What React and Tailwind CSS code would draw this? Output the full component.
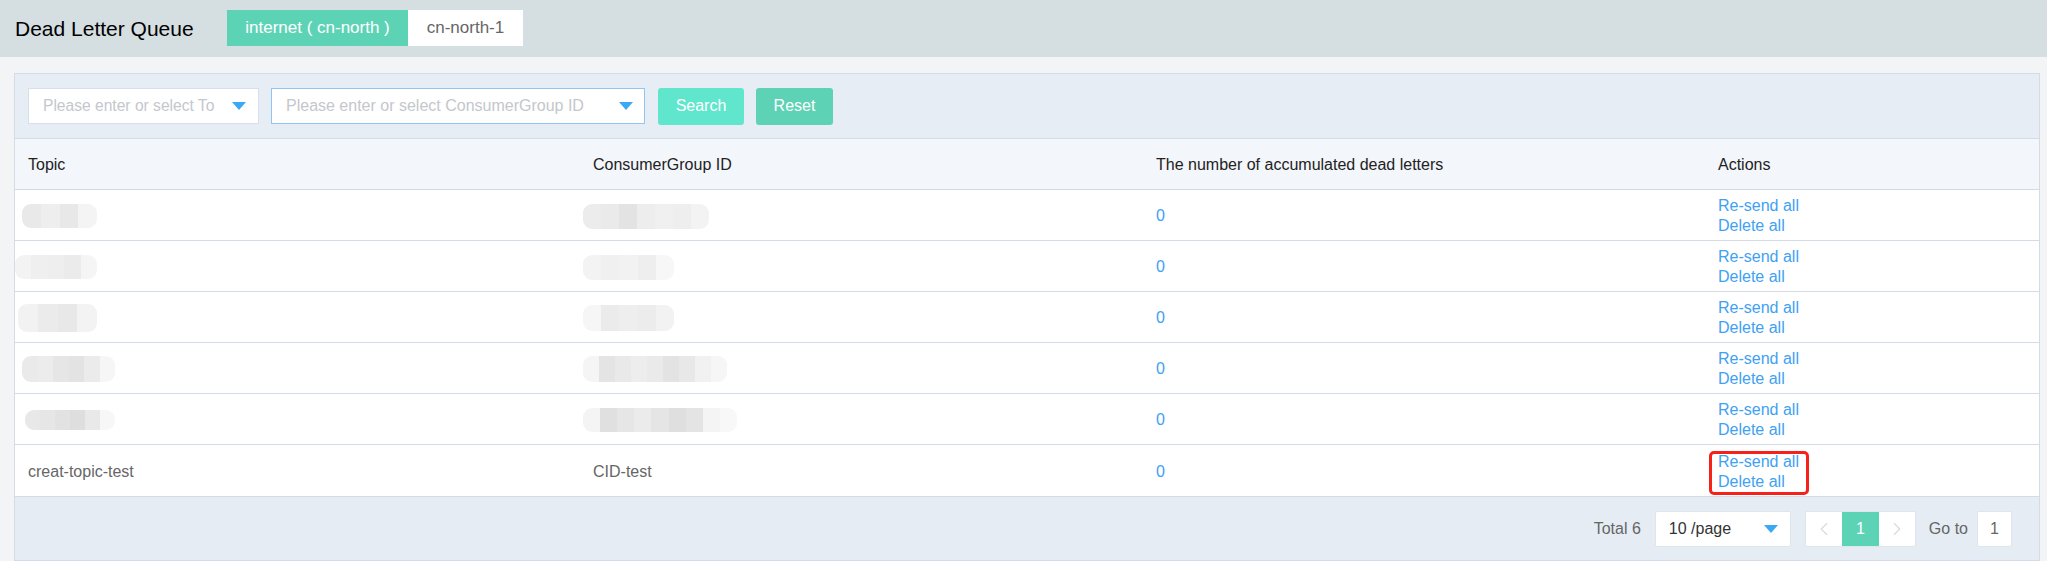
import { ChevronLeft, ChevronRight } from "lucide-react";

const rows = [
  {
    topic: "ml-[-6px] w-[75px] h-[24px]",
    group: "ml-[-10px] w-[126px] h-[25px]",
    tCells: ["bg-[#e9e9e9]", "bg-[#eeeeee]", "bg-[#e8e8e8]", "bg-[#f4f4f4]"],
    gCells: ["bg-[#ececec]", "bg-[#eaeaea]", "bg-[#e3e3e3]", "bg-[#ededed]", "bg-[#f0f0f0]", "bg-[#eeeeee]", "bg-[#f3f3f3]"],
  },
  {
    topic: "ml-[-13px] w-[82px] h-[24px]",
    group: "ml-[-10px] w-[91px] h-[25px]",
    tCells: ["bg-[#f3f3f3]", "bg-[#efefef]", "bg-[#eeeeee]", "bg-[#ebebeb]", "bg-[#f5f5f5]"],
    gCells: ["bg-[#f3f3f3]", "bg-[#f0f0f0]", "bg-[#f2f2f2]", "bg-[#eeeeee]", "bg-[#f7f7f7]"],
  },
  {
    topic: "ml-[-10px] w-[79px] h-[28px]",
    group: "ml-[-10px] w-[91px] h-[26px]",
    tCells: ["bg-[#f2f2f2]", "bg-[#ebebeb]", "bg-[#e8e8e8]", "bg-[#f3f3f3]"],
    gCells: ["bg-[#f6f6f6]", "bg-[#ebebeb]", "bg-[#eeeeee]", "bg-[#ececec]", "bg-[#f2f2f2]"],
  },
  {
    topic: "ml-[-6px] w-[93px] h-[26px]",
    group: "ml-[-10px] w-[144px] h-[26px]",
    tCells: ["bg-[#eaeaea]", "bg-[#ececec]", "bg-[#e6e6e6]", "bg-[#e3e3e3]", "bg-[#ebebeb]", "bg-[#f6f6f6]"],
    gCells: ["bg-[#f5f5f5]", "bg-[#e4e4e4]", "bg-[#e9e9e9]", "bg-[#ededed]", "bg-[#eaeaea]", "bg-[#e3e3e3]", "bg-[#e8e8e8]", "bg-[#f1f1f1]", "bg-[#f6f6f6]"],
  },
  {
    topic: "ml-[-3px] w-[90px] h-[20px]",
    group: "ml-[-10px] w-[154px] h-[24px]",
    tCells: ["bg-[#e8e8e8]", "bg-[#e6e6e6]", "bg-[#e2e2e2]", "bg-[#dedede]", "bg-[#e9e9e9]", "bg-[#f7f7f7]"],
    gCells: ["bg-[#f4f4f4]", "bg-[#e0e0e0]", "bg-[#e6e6e6]", "bg-[#ebebeb]", "bg-[#e5e5e5]", "bg-[#dfdfdf]", "bg-[#e4e4e4]", "bg-[#f4f4f4]", "bg-[#f8f8f8]"],
  },
];

const Blurred = ({ size, cells }) => (
  <div className={`flex overflow-hidden rounded-[9px] blur-[0.6px] ${size}`}>
    {cells.map((c, i) => (
      <div key={i} className={`flex-1 ${c}`} />
    ))}
  </div>
);

const Caret = () => (
  <svg width="14" height="8" viewBox="0 0 14 8" className="shrink-0">
    <path d="M0 0 L14 0 L7 8 Z" fill="#3ba8f6" />
  </svg>
);

const Actions = ({ marked }) => (
  <div className="relative flex flex-col leading-[20px] text-[#3ea1f4]">
    <span>Re-send all</span>
    <span>Delete all</span>
    {marked && (
      <div className="absolute left-[-9px] top-[-1px] w-[100px] h-[44px] border-[3px] border-[#f5211a] rounded-[5px]" />
    )}
  </div>
);

export default function App() {
  return (
    <div className="w-[2047px] h-[561px] bg-[#f3f4f6] font-['Liberation_Sans',Arial,sans-serif] overflow-hidden">
      <div className="flex items-center h-[57px] bg-[#d5dee1] px-[15px]">
        <h1 className="w-[212px] text-[21px] text-black">Dead Letter Queue</h1>
        <div className="flex h-[36px] mb-[2px] text-[17px]">
          <div className="flex items-center justify-center w-[181px] bg-[#5dd3b6] text-white">internet ( cn-north )</div>
          <div className="flex items-center justify-center w-[115px] bg-white text-[#666]">cn-north-1</div>
        </div>
      </div>

      <div className="mt-[16px] ml-[14px] w-[2026px] border border-[#d3dbe4] bg-white">
        <div className="flex items-center gap-[12px] h-[65px] px-[13px] bg-[#e6edf5] border-b border-[#d3dbe4] text-[16px]">
          <div className="flex items-center justify-between w-[231px] h-[36px] pl-[14px] pr-[12px] bg-white border border-[#d7e0ea]">
            <span className="text-[#c4c7cc] whitespace-nowrap text-[15.6px]">Please enter or select To</span>
            <Caret />
          </div>
          <div className="flex items-center justify-between w-[374px] h-[36px] pl-[14px] pr-[11px] bg-white border border-[#92c6f2]">
            <span className="text-[#c4c7cc] whitespace-nowrap">Please enter or select ConsumerGroup ID</span>
            <Caret />
          </div>
          <button className="w-[86px] h-[37px] ml-[1px] rounded-[3px] bg-[#60e6cd] text-white">Search</button>
          <button className="w-[77px] h-[37px] rounded-[3px] bg-[#5dd2b5] text-white">Reset</button>
        </div>

        <div className="text-[16px]">
          <div className="grid grid-cols-[565px_563px_562px_1fr] items-center h-[51px] pt-[2px] bg-[#f3f6fa] border-b border-[#d3dbe4] text-[#222]">
            <div className="px-[13px]">Topic</div>
            <div className="px-[13px]">ConsumerGroup ID</div>
            <div className="px-[13px]">The number of accumulated dead letters</div>
            <div className="px-[13px]">Actions</div>
          </div>

          {rows.map((r, i) => (
            <div key={i} className="grid grid-cols-[565px_563px_562px_1fr] items-center h-[51px] pt-[2px] border-b border-[#d3dbe4]">
              <div className="px-[13px]">
                <Blurred size={r.topic} cells={r.tCells} />
              </div>
              <div className="px-[13px]">
                <Blurred size={r.group} cells={r.gCells} />
              </div>
              <div className="px-[13px] text-[#3ea1f4]">0</div>
              <div className="px-[13px]">
                <Actions />
              </div>
            </div>
          ))}

          <div className="grid grid-cols-[565px_563px_562px_1fr] items-center h-[51px] pt-[2px] text-[#666]">
            <div className="px-[13px]">creat-topic-test</div>
            <div className="px-[13px]">CID-test</div>
            <div className="px-[13px] text-[#3ea1f4]">0</div>
            <div className="px-[13px]">
              <Actions marked />
            </div>
          </div>
        </div>

        <div className="flex items-center justify-end h-[64px] pr-[27px] bg-[#e5ecf4] border-t border-[#d3dbe4] text-[16px]">
          <span className="text-[#666] mr-[14px]">Total 6</span>
          <div className="flex items-center justify-between w-[136px] h-[36px] pl-[13px] pr-[12px] bg-white border border-[#dfe5ec] rounded-[2px] text-[#333] mr-[14px]">
            <span>10 /page</span>
            <Caret />
          </div>
          <div className="flex h-[36px] bg-white border border-[#dfe5ec] rounded-[2px] mr-[13px]">
            <div className="flex items-center justify-center w-[36px] text-[#d9d9d9]">
              <ChevronLeft size={22} strokeWidth={1.2} />
            </div>
            <div className="flex items-center justify-center w-[37px] bg-[#5dd3b6] text-white">1</div>
            <div className="flex items-center justify-center w-[36px] text-[#d9d9d9]">
              <ChevronRight size={22} strokeWidth={1.2} />
            </div>
          </div>
          <span className="text-[#666] mr-[9px]">Go to</span>
          <div className="flex items-center justify-center w-[35px] h-[36px] bg-white border border-[#dfe5ec] rounded-[2px] text-[#666]">1</div>
        </div>
      </div>
    </div>
  );
}
